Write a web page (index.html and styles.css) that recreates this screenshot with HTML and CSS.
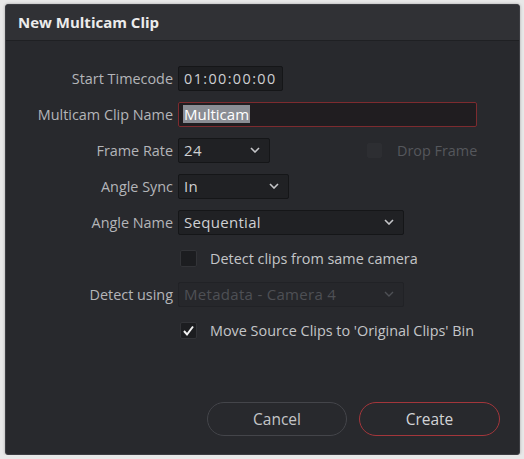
FILE: index.html
```html
<!DOCTYPE html>
<html lang="en">
<head>
    <meta charset="UTF-8">
    <meta name="viewport" content="width=device-width, initial-scale=1.0">
    <title>New Multicam Clip</title>
    <link rel="stylesheet" href="styles.css">
</head>
<body>
    <div class="dialog">
        <div class="titlebar">New Multicam Clip</div>
        <div class="form">
            <div class="row">
                <span class="label">Start Timecode</span>
                <div class="field timecode">01:00:00:00</div>
            </div>
            <div class="row">
                <span class="label">Multicam Clip Name</span>
                <div class="field name"><span class="selected">Multicam</span></div>
            </div>
            <div class="row">
                <span class="label">Frame Rate</span>
                <div class="field select rate">24
                    <svg class="chev" width="10" height="6" viewBox="0 0 10 6"><path d="M1 1l4 4 4-4" fill="none" stroke="currentColor" stroke-width="1.6"/></svg>
                </div>
                <span class="check disabled drop"></span>
                <span class="check-label disabled">Drop Frame</span>
            </div>
            <div class="row">
                <span class="label">Angle Sync</span>
                <div class="field select sync">In
                    <svg class="chev" width="10" height="6" viewBox="0 0 10 6"><path d="M1 1l4 4 4-4" fill="none" stroke="currentColor" stroke-width="1.6"/></svg>
                </div>
            </div>
            <div class="row">
                <span class="label">Angle Name</span>
                <div class="field select wide">Sequential
                    <svg class="chev" width="10" height="6" viewBox="0 0 10 6"><path d="M1 1l4 4 4-4" fill="none" stroke="currentColor" stroke-width="1.6"/></svg>
                </div>
            </div>
            <div class="row">
                <span class="label"></span>
                <span class="check"></span>
                <span class="check-label">Detect clips from same camera</span>
            </div>
            <div class="row">
                <span class="label">Detect using</span>
                <div class="field select wide off">Metadata - Camera 4
                    <svg class="chev" width="10" height="6" viewBox="0 0 10 6"><path d="M1 1l4 4 4-4" fill="none" stroke="currentColor" stroke-width="1.4"/></svg>
                </div>
            </div>
            <div class="row">
                <span class="label"></span>
                <span class="check on">
                    <svg width="13" height="13" viewBox="0 0 13 13"><path d="M2 7l3 3.5L11 2.5" fill="none" stroke="#f2f2f2" stroke-width="2"/></svg>
                </span>
                <span class="check-label">Move Source Clips to 'Original Clips' Bin</span>
            </div>
        </div>
        <div class="buttons">
            <button class="btn">Cancel</button>
            <button class="btn primary">Create</button>
        </div>
    </div>
</body>
</html>
```

FILE: styles.css
```css
body {
    margin: 0;
    padding: 4px 4px 0 5px;
    background-color: #e8e8e8;
    font-family: "Open Sans", "Noto Sans", sans-serif;
}
.dialog {
    width: 513px;
    height: 449px;
    background-color: #28292d;
    border: 1px solid #3c3d42;
    border-radius: 3px;
    box-shadow: 0 0 3px rgba(0,0,0,0.3);
    overflow: hidden;
}
.titlebar {
    height: 35px;
    line-height: 34px;
    padding-left: 12px;
    background-color: #303135;
    border-bottom: 1px solid #1f2023;
    color: #ececec;
    font-weight: bold;
    font-size: 15px;
}
.form {
    padding-top: 19px;
}
.row {
    display: flex;
    align-items: center;
    height: 36px;
}
.label {
    width: 167px;
    flex: none;
    margin-right: 5px;
    text-align: right;
    color: #b4b5b9;
    font-size: 14.4px;
}
.field {
    box-sizing: border-box;
    height: 25px;
    display: flex;
    align-items: center;
    padding-left: 5px;
    background-color: #1e1f22;
    border: 1px solid #151618;
    border-radius: 2px;
    color: #cfd0d3;
    font-size: 15px;
    letter-spacing: 0.3px;
}
.timecode {
    width: 105px;
    font-size: 14.4px;
    letter-spacing: 1.4px;
}
.name {
    width: 299px;
    border-color: #7d2b2f;
    background-color: #201d20;
    padding-left: 4px;
    letter-spacing: 0;
}
.selected {
    background-color: #8a8d94;
    color: #ffffff;
    padding: 0 1px;
    line-height: 18px;
}
.select {
    justify-content: space-between;
    padding-right: 9px;
    background-color: #202124;
}
.chev {
    color: #c4c5c8;
}
.rate {
    width: 92px;
}
.sync {
    width: 111px;
}
.wide {
    width: 226px;
}
.off {
    background-color: #26272b;
    border-color: #212226;
    color: #4e5055;
}
.off .chev {
    color: #4e5055;
}
.check {
    box-sizing: border-box;
    width: 17px;
    height: 17px;
    margin-left: 2px;
    display: flex;
    align-items: center;
    justify-content: center;
    background-color: #1c1d20;
    border: 1px solid #323337;
    border-radius: 2px;
}
.check.disabled {
    width: 15px;
    height: 15px;
    background-color: #2d2e32;
    border-color: #2d2e32;
}
.drop {
    margin-left: 97px;
}
.check-label {
    margin-left: 13px;
    color: #c4c5c8;
    font-size: 14.4px;
}
.check-label.disabled {
    margin-left: 15px;
    color: #55575c;
}
.buttons {
    display: flex;
    justify-content: flex-end;
    gap: 12px;
    margin-top: 54px;
    padding-right: 19px;
}
.btn {
    width: 140px;
    height: 34px;
    border-radius: 17px;
    background-color: #28292d;
    border: 1.5px solid #44454a;
    color: #c4c5c8;
    font-family: "Open Sans", "Noto Sans", sans-serif;
    font-size: 15.5px;
}
.btn.primary {
    width: 141px;
    border-color: #a3363b;
    color: #d2d3d6;
}
```
